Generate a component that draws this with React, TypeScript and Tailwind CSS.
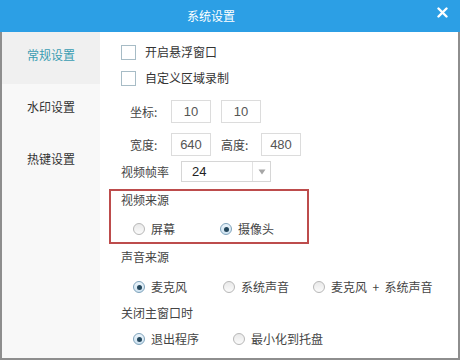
import React from "react";

const cjk = { fontFamily: '"Noto Sans CJK SC", "Noto Sans", sans-serif' };
const latin = { fontFamily: '"Liberation Sans", "Noto Sans CJK SC", sans-serif' };

function Checkbox({ label }: { label: string }) {
  return (
    <div className="flex items-center h-[26px]">
      <span className="w-[15px] h-[15px] border border-[#a7bcc6] bg-white" />
      <span className="ml-[9px] text-[12px] leading-[18px] text-[#333]">{label}</span>
    </div>
  );
}

function Radio({ label, checked, width }: { label: string; checked?: boolean; width: string }) {
  return (
    <div className={`flex items-center ${width}`}>
      {checked ? (
        <span className="w-[12px] h-[12px] rounded-full border border-[#7fa3bb] bg-gradient-to-b from-[#eaf4fb] to-[#cfe3f1] flex items-center justify-center">
          <span className="w-[5px] h-[5px] rounded-full bg-[#24475c]" />
        </span>
      ) : (
        <span className="w-[12px] h-[12px] rounded-full border border-[#b7b7b7] bg-gradient-to-b from-[#e9e9e9] to-[#fbfbfb]" />
      )}
      <span className="ml-[6px] text-[12px] leading-[18px] text-[#444] whitespace-pre">{label}</span>
    </div>
  );
}

function NumBox({ value }: { value: string }) {
  return (
    <div
      className="w-[40px] h-[23px] border border-[#dcdcdc] bg-white flex items-center justify-center text-[13px] text-[#555]"
      style={latin}
    >
      {value}
    </div>
  );
}

export default function App() {
  return (
    <div className="w-[460px] h-[360px] flex flex-col bg-white" style={cjk}>
      {/* title bar */}
      <div className="relative h-[32px] bg-[#2c9fe5] flex items-center justify-center pr-[38px] shrink-0">
        <span className="text-[12px] text-white leading-[18px]">系统设置</span>
        <svg className="absolute right-[12px] top-[7px]" width="11" height="11" viewBox="0 0 11 11">
          <path d="M1.5 1.5 L9.5 9.5 M9.5 1.5 L1.5 9.5" stroke="#fff" strokeWidth="2.4" strokeLinecap="round" />
        </svg>
      </div>

      <div className="flex flex-1 border-x-2 border-b-2 border-[#8e8e8e] min-h-0">
        {/* sidebar */}
        <div className="w-[98px] bg-[#f8f8f8] flex flex-col text-[12px] leading-[18px]">
          <div className="h-[52px] bg-[#f0f0f0] flex items-center justify-center pb-[6px] text-[#3a9db2]">常规设置</div>
          <div className="h-[52px] flex items-center justify-center pb-[6px] text-[#333]">水印设置</div>
          <div className="h-[52px] flex items-center justify-center pb-[6px] text-[#333]">热键设置</div>
        </div>

        {/* content */}
        <div className="flex-1 flex flex-col pl-[9px] pt-[7px]">
          <div className="pl-[12px]">
            <Checkbox label="开启悬浮窗口" />
            <Checkbox label="自定义区域录制" />
          </div>

          <div className="flex items-center mt-[9px] pl-[21px] text-[12px] text-[#444]">
            <span className="w-[41px]">坐标:</span>
            <NumBox value="10" />
            <span className="w-[10px]" />
            <NumBox value="10" />
          </div>

          <div className="flex items-center mt-[10px] pl-[21px] text-[12px] text-[#444]">
            <span className="w-[41px]">宽度:</span>
            <NumBox value="640" />
            <span className="w-[10px]" />
            <span className="w-[40px]">高度:</span>
            <NumBox value="480" />
          </div>

          <div className="flex items-center mt-[5px] pl-[12px] text-[12px] text-[#444]">
            <span className="w-[60px]">视频帧率</span>
            <div className="w-[90px] h-[21px] border border-[#d6d6d6] bg-white flex items-center">
              <span className="flex-1 pl-[10px] text-[13px] text-[#222]" style={latin}>24</span>
              <span className="w-[18px] h-full border-l border-[#e2e2e2] flex items-center justify-center">
                <svg width="8" height="6" viewBox="0 0 8 6">
                  <path d="M0.5 0.5 L7.5 0.5 L4 5.5 Z" fill="#a6a6a6" />
                </svg>
              </span>
            </div>
          </div>

          <div className="mt-[7px] w-[200px] border-2 border-[#bd4c4c] pl-[10px] pb-[4px]">
            <div className="h-[18px] text-[12px] leading-[18px] text-[#444]">视频来源</div>
            <div className="flex items-center h-[18px] mt-[11px] pl-[12px]">
              <Radio label="屏幕" width="w-[90px]" />
              <Radio label="摄像头" checked width="w-[90px]" />
            </div>
          </div>

          <div className="pl-[12px]">
            <div className="mt-[4px] h-[18px] text-[12px] leading-[18px] text-[#444]">声音来源</div>
            <div className="flex items-center h-[18px] mt-[12px] pl-[12px]">
              <Radio label="麦克风" checked width="w-[90px]" />
              <Radio label="系统声音" width="w-[90px]" />
              <Radio label="麦克风  +  系统声音" width="w-[124px]" />
            </div>
            <div className="mt-[8px] h-[18px] text-[12px] leading-[18px] text-[#444]">关闭主窗口时</div>
            <div className="flex items-center h-[18px] mt-[8px] pl-[12px]">
              <Radio label="退出程序" checked width="w-[100px]" />
              <Radio label="最小化到托盘" width="w-[120px]" />
            </div>
          </div>
        </div>
      </div>
    </div>
  );
}
